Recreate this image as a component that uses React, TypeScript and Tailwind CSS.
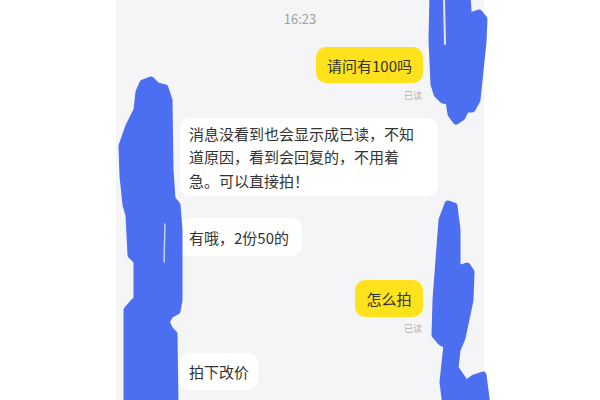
import React from "react";

const BLUE = "#4c6ef1";

function Scribbles() {
  return (
    <svg className="absolute inset-0 pointer-events-none" width="600" height="400" viewBox="0 0 600 400">
      <g fill={BLUE} stroke={BLUE} strokeWidth={7} strokeLinejoin="round" strokeLinecap="round">
        {/* top right */}
        <path d="M433 -6 L467 -6 L469 28 L473 15 L479 13 L484 19 L483 42 L477 100 L472 109 L466 109 L462 117 L456 121 L451 114 L449 101 L443 100 L437 94 L434 84 L432 40 Z" />
        {/* left */}
        <path d="M143 83 L151 80 L157 86 L165 88 L169 100 L170 170 L172 199 L177 205 L179 230 L179 300 L177 311 L170 315 L166 322 L170 330 L174 334 L175 406 L127 406 L127 310 L133 303 L137 299 L137 261 L131 255 L129 215 L126 205 L123 176 L122 146 L129 126 L137 110 L139 92 Z" />
        {/* bottom right */}
        <path d="M448 204 L454 206 L457 230 L457 274 L461 268 L467 266 L471 272 L470 300 L462 338 L457 350 L455 368 L466 384 L474 378 L483 375 L487 406 L446 406 L443 382 L447 345 L441 342 L435 335 L436 300 L442 220 Z" />
      </g>
      <path d="M444 -2 L445 44" stroke="#e3e6f6" strokeWidth={2} strokeLinecap="round" />
      <path d="M165 224 L164 262" stroke="#c9d1f4" strokeWidth={1.5} strokeLinecap="round" />
    </svg>
  );
}

function Yellow({ children, w }: { children: React.ReactNode; w: string }) {
  return (
    <div className={`h-[37px] ${w} rounded-[10px] bg-[#fde21c] flex items-center justify-center text-[15px] text-[#333] leading-none`}>
      {children}
    </div>
  );
}

function Read() {
  return <div className="text-[9px] leading-[12px] text-[#b0b0b0] mr-[1px]">已读</div>;
}

export default function App() {
  return (
    <div className="w-[600px] h-[400px] bg-white flex relative overflow-hidden font-['Noto_Sans_CJK_SC',sans-serif]">
      <div className="ml-[116px] w-[368px] h-full bg-[#f5f5f7] flex flex-col">
        <div className="h-[38px] flex items-center justify-center text-[13px] text-[#a0a0a0]">16:23</div>

        <div className="mt-[9px] flex flex-col items-end pr-[61px]">
          <div className="h-[36px] w-[107px] rounded-[10px] bg-[#fde21c] flex items-center justify-center text-[15px] text-[#333] leading-none">
            请问有100吗
          </div>
          <div className="mt-[7px]">
            <Read />
          </div>
        </div>

        <div className="mt-[16px] pl-[64px] flex flex-col items-start">
          <div className="w-[258px] h-[78px] rounded-[10px] bg-white px-[9px] py-[4px] text-[15px] leading-[23.5px] text-[#333] flex flex-col justify-center">
            <span className="whitespace-nowrap">消息没看到也会显示成已读，不知</span>
            <span className="whitespace-nowrap">道原因，看到会回复的，不用着</span>
            <span className="whitespace-nowrap">急。可以直接拍！</span>
          </div>
          <div className="mt-[22px] h-[38px] w-[122px] rounded-[10px] bg-white pl-[9px] flex items-center text-[15px] text-[#333] leading-none">
            有哦，2份50的
          </div>
        </div>

        <div className="mt-[24px] flex flex-col items-end pr-[61px]">
          <Yellow w="w-[68px]">怎么拍</Yellow>
          <div className="mt-[6px]">
            <Read />
          </div>
        </div>

        <div className="mt-[18px] pl-[64px] flex flex-col items-start">
          <div className="h-[37px] w-[78px] rounded-[10px] bg-white flex items-center justify-center text-[15px] text-[#333] leading-none">
            拍下改价
          </div>
        </div>
      </div>
      <Scribbles />
    </div>
  );
}
